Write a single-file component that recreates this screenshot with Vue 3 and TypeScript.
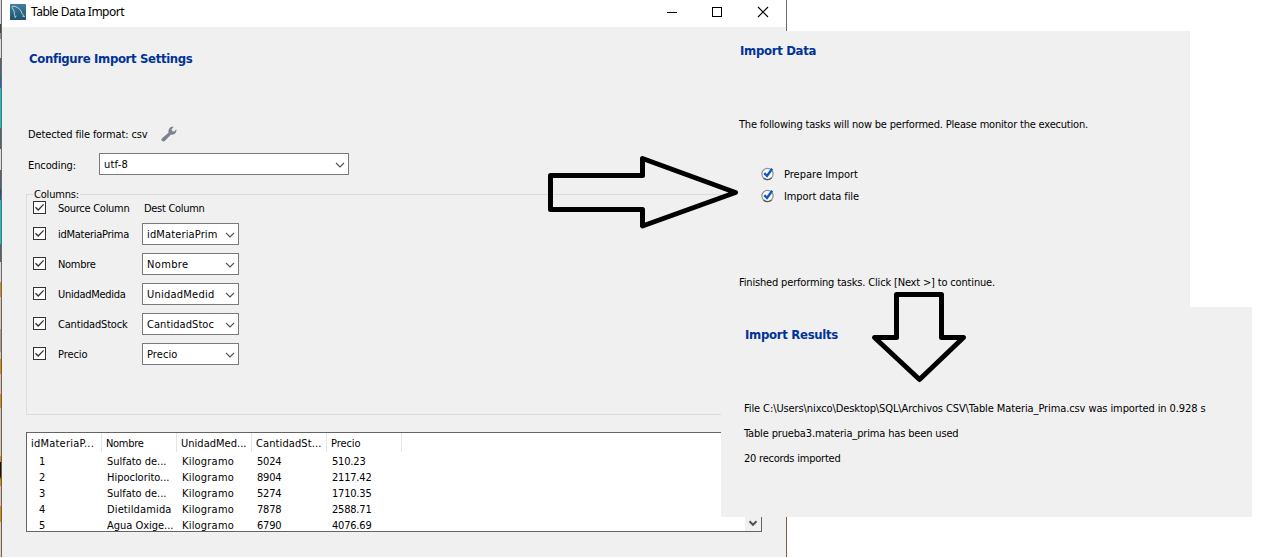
<script setup lang="ts">
import type { Directive } from 'vue'

interface Label {
  text: string
  width: number
}

interface ColumnMapping {
  source: Label
  dest: Label
}

// Tracks a label out (or in) so that it takes the given width in pixels.
const vFit: Directive<HTMLElement, number> = {
  mounted(el, { value }) {
    const natural = el.getBoundingClientRect().width
    const count = (el.textContent ?? '').length
    el.style.letterSpacing = `${(value - natural) / count}px`
  },
}

const label = (text: string, width: number): Label => ({ text, width })

const mappings: ColumnMapping[] = [
  { source: label('idMateriaPrima', 71), dest: label('idMateriaPrim', 70.5) },
  { source: label('Nombre', 37.5), dest: label('Nombre', 41.5) },
  { source: label('UnidadMedida', 67.5), dest: label('UnidadMedid', 67.5) },
  { source: label('CantidadStock', 69.5), dest: label('CantidadStoc', 67) },
  { source: label('Precio', 29.5), dest: label('Precio', 30.5) },
]

const headers: Label[] = [
  label('idMateriaP...', 63),
  label('Nombre', 37.5),
  label('UnidadMed...', 65.5),
  label('CantidadSt...', 65.5),
  label('Precio', 29.5),
]

const rows: Label[][] = [
  [label('1', 7), label('Sulfato de...', 59.5), label('Kilogramo', 52), label('5024', 24.5), label('510.23', 33.5)],
  [label('2', 7), label('Hipoclorito...', 62.5), label('Kilogramo', 52), label('8904', 24.5), label('2117.42', 39.5)],
  [label('3', 7), label('Sulfato de...', 59.5), label('Kilogramo', 52), label('5274', 24.5), label('1710.35', 39.5)],
  [label('4', 7), label('Dietildamida', 64.5), label('Kilogramo', 52), label('7878', 24.5), label('2588.71', 39.5)],
  [label('5', 7), label('Agua Oxige...', 66.5), label('Kilogramo', 52), label('6790', 24.5), label('4076.69', 39.5)],
]

const tasks: Label[] = [label('Prepare Import', 74), label('Import data file', 75)]

const results: Label[] = [
  label('File C:\\Users\\nixco\\Desktop\\SQL\\Archivos CSV\\Table Materia_Prima.csv was imported in 0.928 s', 461.5),
  label('Table prueba3.materia_prima has been used', 214.5),
  label('20 records imported', 96.5),
]
</script>

<template>
  <div class="canvas">
    <div class="backdrop"></div>

    <section class="window">
      <header class="titlebar">
        <svg class="app-icon" width="16" height="16" viewBox="0 0 16 16">
          <defs>
            <linearGradient id="tile" x1="0" y1="0" x2="0" y2="1">
              <stop offset="0" stop-color="#407f9f" />
              <stop offset="1" stop-color="#1e526f" />
            </linearGradient>
          </defs>
          <rect width="16" height="16" rx="0.6" fill="url(#tile)" />
          <path
            d="M5.2 13.6 4.5 10.5 4.2 7.5 2.2 3.5 2.4 2.2 5 2.4C9 3.8 11.2 6.2 12 9.5L14.6 12.6 12.4 12.2M5.2 13.6 6.2 11.8"
            fill="none" stroke="#c5d9e2" stroke-width="0.9"
          />
        </svg>
        <span v-fit="93" class="title">Table Data Import</span>
        <svg class="controls" width="102" height="12" viewBox="0 0 102 12" fill="none" stroke="#000">
          <path d="M0 6.5H10M45.5 1.5h9v9h-9z" shape-rendering="crispEdges" />
          <path d="M91 1 101 11M101 1 91 11" stroke-width="1.1" />
        </svg>
      </header>

      <div class="body">
        <h1 class="heading"><span v-fit="163">Configure Import Settings</span></h1>

        <div class="format">
          <span v-fit="119.5" class="lowered">Detected file format: csv</span>
          <svg class="wrench" width="16" height="16" viewBox="0 0 16 16">
            <path
              d="M1 12.2 7.5 6.8C7 3.8 8.5 1 11.8.6L12.6 1 10.6 3.2 11.2 5.2 13.2 5.5 15.1 3.5 15.5 4.2C15.3 7.3 12.8 9 9.8 8.8L3.8 15C2.8 15.8 1.6 15.5.9 14.8.2 14 .2 13 1 12.2Z"
              fill="#7c858f"
            />
          </svg>
        </div>

        <div class="encoding">
          <div class="encoding-label"><span v-fit="48">Encoding:</span></div>
          <div class="combo wide">
            <span v-fit="24" class="lowered">utf-8</span>
            <svg class="chevron" width="10" height="6" viewBox="0 0 10 6"><path d="M1 1 5 5 9 1" /></svg>
          </div>
        </div>

        <fieldset class="columns">
          <legend><span v-fit="45">Columns:</span></legend>
          <div class="columns-head">
            <svg class="check" width="13" height="13" viewBox="0 0 13 13">
              <rect x="0.5" y="0.5" width="12" height="12" /><path d="M2.5 6.3 5.2 9 10.6 3.4" />
            </svg>
            <span class="source lowered"><span v-fit="71.5">Source Column</span></span>
            <span v-fit="60.5" class="dest-title lowered">Dest Column</span>
          </div>
          <div v-for="item in mappings" :key="item.source.text" class="mapping">
            <svg class="check" width="13" height="13" viewBox="0 0 13 13">
              <rect x="0.5" y="0.5" width="12" height="12" /><path d="M2.5 6.3 5.2 9 10.6 3.4" />
            </svg>
            <span class="source lowered"><span v-fit="item.source.width">{{ item.source.text }}</span></span>
            <div class="combo">
              <span v-fit="item.dest.width" class="lowered">{{ item.dest.text }}</span>
              <svg class="chevron" width="10" height="6" viewBox="0 0 10 6"><path d="M1 1 5 5 9 1" /></svg>
            </div>
          </div>
        </fieldset>

        <div class="preview">
          <div class="grid">
            <div class="grid-head">
              <div v-for="cell in headers" :key="cell.text" class="th">
                <span v-fit="cell.width">{{ cell.text }}</span>
              </div>
            </div>
            <div v-for="(row, r) in rows" :key="r" class="grid-row">
              <div v-for="(cell, c) in row" :key="c" class="td">
                <span v-fit="cell.width">{{ cell.text }}</span>
              </div>
            </div>
          </div>
          <div class="scrollbar">
            <svg width="10" height="7" viewBox="0 0 10 7"><path d="M1.5 1.3 5 4.8 8.5 1.3" /></svg>
          </div>
        </div>
      </div>
    </section>

    <section class="panel import-data">
      <h2 class="heading"><span v-fit="76">Import Data</span></h2>
      <p class="intro"><span v-fit="349">The following tasks will now be performed. Please monitor the execution.</span></p>
      <ul class="tasks">
        <li v-for="task in tasks" :key="task.text">
          <svg width="14" height="14" viewBox="0 0 14 14">
            <circle cx="6.5" cy="7" r="5.6" fill="#fafafa" stroke="#929292" stroke-width="1.2" />
            <path d="M10.6 10.9A5.7 5.7 0 0 1 2.6 11.2" fill="none" stroke="#5c5c5c" stroke-width="1.3" />
            <path d="M3.3 6.2 6 9 11.2 1.8" fill="none" stroke="#1258c4" stroke-width="2.4" />
          </svg>
          <span v-fit="task.width" class="lowered">{{ task.text }}</span>
        </li>
      </ul>
      <p class="finished"><span v-fit="256">Finished performing tasks. Click [Next &gt;] to continue.</span></p>
    </section>

    <section class="panel import-results">
      <h2 class="heading"><span v-fit="93">Import Results</span></h2>
      <p v-for="line in results" :key="line.text" class="result"><span v-fit="line.width">{{ line.text }}</span></p>
    </section>

    <svg class="arrows" width="1265" height="558" viewBox="0 0 1265 558">
      <path d="M550.5 175.5H642.5V158.5L735.5 192.5 642.5 226V209.5H550.5Z" />
      <path d="M896.5 294.5H941.5V337.5H963.5L919.5 379.5 874.5 337.5H896.5Z" />
    </svg>
  </div>
</template>

<style>
body {
  margin: 0;
  background: #fff;
}
</style>

<style scoped>
.canvas {
  position: relative;
  box-sizing: border-box;
  width: 1265px;
  height: 558px;
  overflow: hidden;
  background: #fff;
  color: #000;
  font: 11px/16px 'DejaVu Sans Condensed', 'DejaVu Sans', sans-serif;
  font-stretch: condensed;
  white-space: pre;
}

.canvas * {
  box-sizing: border-box;
}

svg {
  display: block;
  flex: none;
}

.lowered {
  padding-top: 2px;
}

.backdrop {
  position: absolute;
  inset: 0 auto auto 0;
  width: 2px;
  height: 557px;
  background: linear-gradient(
    #d8d8d8 0 24px, #454545 24px 33px, #8a8a8a 33px 39px, #dedede 39px 58px,
    #53636f 58px 77px, #087d80 77px 81px, #2a5bd0 81px 88px, #00cdd0 88px 128px,
    #53636f 128px 149px, #dedede 149px 170px, #53636f 170px 189px, #075d70 189px 194px,
    #2450bb 194px 200px, #00cdd0 200px 244px, #53636f 244px 262px, #d8d8d8 262px 282px,
    #d98a1c 282px 297px, #c7cacc 297px 329px, #9ca3a9 329px 352px, #c7cacc 352px 359px,
    #d98a1c 359px 374px, #c7cacc 374px 394px, #d98a1c 394px 408px, #c7cacc 408px 456px,
    #d98a1c 456px 462px, #111 462px 476px, #d98a1c 480px 486px, #c7cacc 486px 506px,
    #d98a1c 506px 522px, #d0d2d4 522px
  );
}

.window {
  position: absolute;
  left: 1px;
  top: 0;
  width: 786px;
  height: 557px;
  display: flex;
  flex-direction: column;
  background: #f0f0f0;
  border: solid #6b6b6b;
  border-width: 0 1px;
  border-image: linear-gradient(#6b6b6b 0 300px, #76603f 300px) 1;
  border-image-slice: 0 1;
}

.titlebar {
  display: flex;
  align-items: center;
  height: 27px;
  padding: 0 17px 4px 8px;
  background: #fff;
}

.title {
  margin-left: 5px;
  font: 12px/16px 'Noto Sans', 'Open Sans', sans-serif;
}

.controls {
  margin-left: auto;
}

.body {
  display: flex;
  flex-direction: column;
  padding: 23px 24px 0;
}

.heading {
  margin: 0;
  height: 18px;
  font-size: 13px;
  line-height: 18px;
  font-weight: bold;
  color: #003399;
}

.body .heading {
  padding-left: 3px;
}

.format {
  display: flex;
  align-items: center;
  gap: 13px;
  height: 16px;
  margin-top: 58px;
  padding-left: 2px;
}

.encoding {
  display: flex;
  align-items: center;
  height: 22px;
  margin-top: 11px;
  padding-left: 2px;
}

.encoding-label {
  width: 71px;
  padding-top: 3px;
}

.combo {
  display: flex;
  align-items: center;
  justify-content: space-between;
  width: 97px;
  height: 22px;
  padding: 0 3px 0 4px;
  background: #fff;
  border: 1px solid #7a7a7a;
}

.combo.wide {
  width: 250px;
}

.chevron {
  margin-top: 1px;
}

.chevron path {
  fill: none;
  stroke: #505050;
  stroke-width: 1.1;
}

.columns {
  display: flex;
  flex-direction: column;
  width: 736px;
  height: 229px;
  min-width: 0;
  margin: 11px 0 0;
  padding: 0 0 0 6px;
  border: 1px solid #dcdcdc;
}

legend {
  height: 16px;
  line-height: 18px;
  padding: 0 1px;
  margin-left: 0;
}

.columns-head {
  display: flex;
  align-items: center;
  height: 16px;
  margin-top: -2px;
}

.mapping {
  display: flex;
  align-items: center;
  height: 22px;
  margin-top: 8px;
}

.columns-head + .mapping {
  margin-top: 7px;
}

.check {
  margin-bottom: 1px;
  fill: #fff;
  stroke: #333;
}

.check path {
  fill: none;
  stroke-width: 1.3;
}

.source {
  width: 96px;
  padding-left: 12px;
}

.dest-title {
  margin-left: 2px;
}

.preview {
  display: flex;
  justify-content: space-between;
  width: 736px;
  height: 100px;
  margin-top: 17px;
  overflow: hidden;
  background: #fff;
  border: 1px solid #646464;
}

.grid-head,
.grid-row {
  display: flex;
}

.th {
  width: 75px;
  height: 19px;
  margin-bottom: 2px;
  padding: 3px 0 0 4px;
  border-right: 1px solid #e5e5e5;
}

.td {
  width: 75px;
  height: 16px;
  padding-left: 5px;
}

.td:first-child {
  padding-left: 12px;
}

.scrollbar {
  display: flex;
  align-items: flex-end;
  justify-content: center;
  width: 16px;
  padding-bottom: 4px;
  background: #f0f0f0;
}

.scrollbar path {
  fill: none;
  stroke: #505050;
  stroke-width: 2;
}

.panel {
  position: absolute;
  left: 721px;
  background: #f0f0f0;
}

.panel p {
  margin: 0;
  height: 16px;
}

.import-data {
  top: 31px;
  width: 469px;
  height: 276px;
  padding: 11px 18px 0;
}

.import-data .heading {
  padding-left: 1px;
}

.import-data .intro {
  margin-top: 57px;
}

.tasks {
  margin: 30px 0 0 22px;
  padding: 0;
  list-style: none;
}

.tasks li {
  display: flex;
  align-items: center;
  gap: 9px;
  height: 22px;
}

.import-data .finished {
  margin-top: 68px;
}

.import-results {
  top: 307px;
  width: 531px;
  height: 210px;
  padding: 19px 23px 0;
}

.import-results .heading {
  padding-left: 1px;
  margin-bottom: 57px;
}

.import-results .result + .result {
  margin-top: 9px;
}

.arrows {
  position: absolute;
  left: 0;
  top: 0;
}

.arrows path {
  fill: none;
  stroke: #000;
  stroke-width: 5;
  stroke-linejoin: round;
}
</style>
